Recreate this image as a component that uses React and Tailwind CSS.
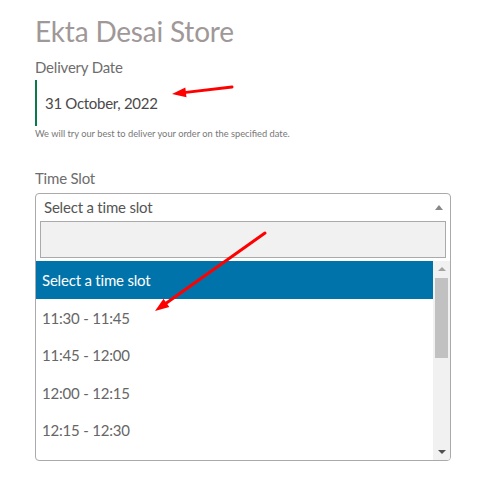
import React from "react";

const slots = ["11:30 - 11:45", "11:45 - 12:00", "12:00 - 12:15", "12:15 - 12:30"];

const Arrow = ({ x1, y1, x2, y2 }) => {
  const a = Math.atan2(y2 - y1, x2 - x1);
  const len = 14;
  const w = 5;
  const bx = x2 - Math.cos(a) * len;
  const by = y2 - Math.sin(a) * len;
  const px = -Math.sin(a) * w;
  const py = Math.cos(a) * w;
  return (
    <g>
      <line x1={x1} y1={y1} x2={bx} y2={by} stroke="#ff0000" strokeWidth="3" strokeLinecap="round" />
      <polygon points={`${x2},${y2} ${bx + px},${by + py} ${bx - px},${by - py}`} fill="#ff0000" />
    </g>
  );
};

export default function App() {
  return (
    <div
      className="relative w-[487px] h-[496px] bg-white overflow-hidden"
      style={{ fontFamily: '"Lato", "Open Sans", sans-serif' }}
    >
      <div className="pl-[35px] pr-[36px] pt-[12px]">
        <h1 className="text-[28px] leading-[38px] tracking-[-0.2px] text-[#a09898]">Ekta Desai Store</h1>
        <div className="mt-[7px] text-[15px] leading-[20px] tracking-[-0.2px] text-[#6d6d6d]">Delivery Date</div>
        <div className="mt-[3px] h-[46px] border-l-2 border-[#0a7a4b] pl-[8px] flex items-center text-[15px] tracking-[-0.3px] text-[#4a4a4a]">
          31 October, 2022
        </div>
        <p className="mt-[1px] text-[9.3px] leading-[14px] text-[#777]">
          We will try our best to deliver your order on the specified date.
        </p>

        <div className="mt-[27px] text-[15px] leading-[20px] tracking-[-0.2px] text-[#6d6d6d]">Time Slot</div>
        <div className="mt-[5px] h-[268px] border border-[#aaa] rounded-[4px] flex flex-col overflow-hidden">
          <div className="h-[27px] shrink-0 flex items-center justify-between pl-[8px] pr-[7px] text-[15px] tracking-[-0.2px] text-[#555]">
            <span>Select a time slot</span>
            <span className="w-0 h-0 border-x-[4px] border-x-transparent border-b-[5px] border-b-[#888]" />
          </div>
          <div className="px-[4px]">
            <div className="h-[37px] border border-[#aaa] bg-[#f1f1f1]" />
          </div>
          <div className="mt-[3px] flex flex-1 min-h-0">
            <ul className="flex-1 text-[15px] tracking-[-0.2px]">
              <li className="h-[38px] flex items-center pl-[6px] bg-[#0073aa] text-white">Select a time slot</li>
              {slots.map((s) => (
                <li key={s} className="h-[37.5px] flex items-center pl-[6px] text-[#666]">
                  {s}
                </li>
              ))}
            </ul>
            <div className="w-[17px] shrink-0 bg-[#f1f1f1] flex flex-col items-center pt-[6px] pb-[6px]">
              <span className="w-0 h-0 border-x-[4px] border-x-transparent border-b-[4px] border-b-[#a3a3a3]" />
              <div className="mt-[7px] w-[13px] h-[80px] bg-[#c1c1c1]" />
              <div className="flex-1" />
              <span className="w-0 h-0 border-x-[4px] border-x-transparent border-t-[4px] border-t-[#505050]" />
            </div>
          </div>
        </div>
      </div>

      <svg className="absolute inset-0 pointer-events-none" width="487" height="496">
        <Arrow x1={232} y1={87} x2={172} y2={94} />
        <Arrow x1={265} y1={233} x2={155} y2={311} />
      </svg>
    </div>
  );
}
